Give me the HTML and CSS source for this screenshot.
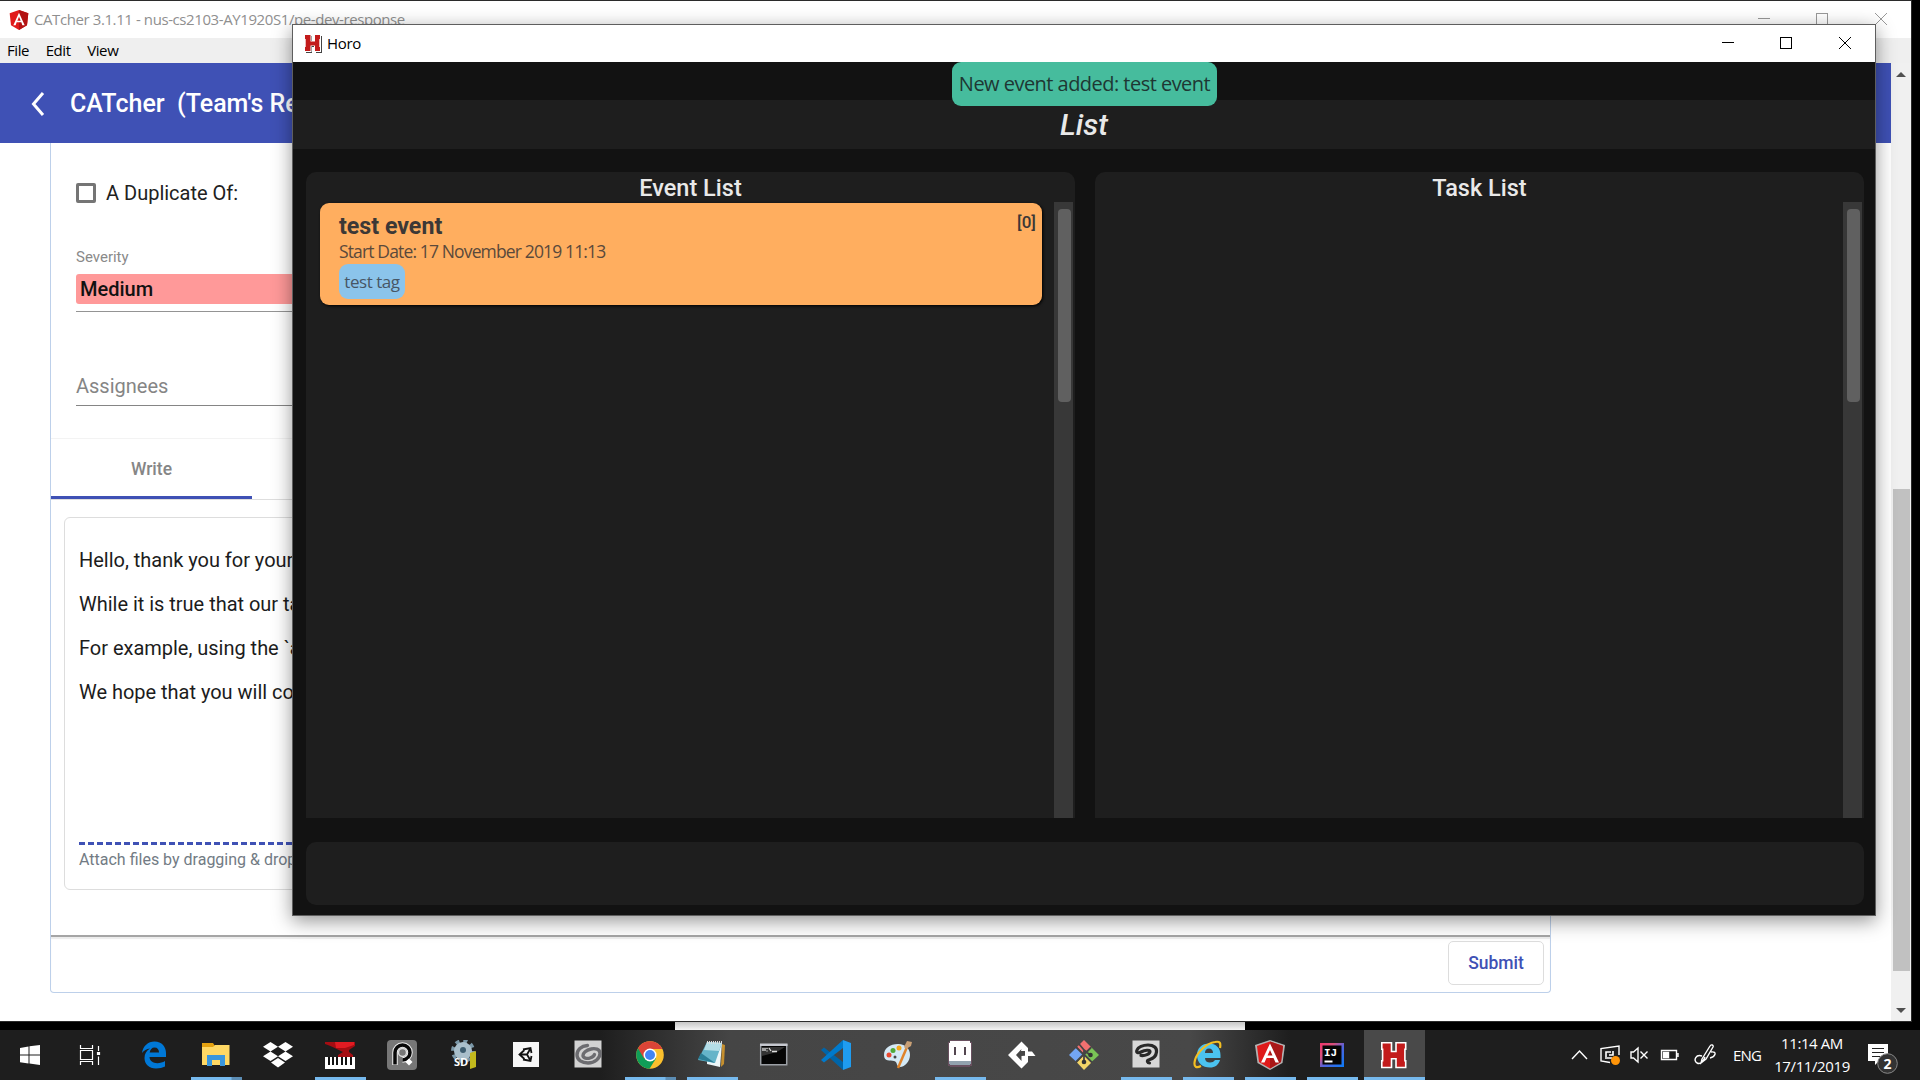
FILE: index.html
```html
<!DOCTYPE html>
<html lang="en">
<head>
<meta charset="utf-8">
<title>Desktop</title>
<link rel="stylesheet" href="styles.css">
</head>
<body>
<div class="desktop">
  <div class="backdrop"></div>

  <section class="catcher">
    <header class="titlebar muted">
      <svg class="ang" width="20" height="22" viewBox="0 0 30 30"><path fill="#e11a1a" d="M15 0 29 5 27 23 15 30 3 23 1 5z"/><path fill="#b31212" d="M15 0 29 5 27 23 15 30z"/><path fill="#fff" fill-rule="evenodd" d="M15 4 23.500 23H20L18.500 18.500H11.500L10 23H6.500zM15 10 12.500 16H17.500z"/></svg>
      <span class="t-title">CATcher 3.1.11 - nus-cs2103-AY1920S1/pe-dev-response</span>
      <svg class="winctl" width="174" height="37" viewBox="0 0 174 37" fill="none" stroke="#999" shape-rendering="crispEdges"><path d="M21 17.500h12M79.500 12.500h11v11h-11z"/><path shape-rendering="auto" d="M138 12l12 12M150 12l-12 12"/></svg>
    </header>
    <nav class="menubar"><span>File</span><span>Edit</span><span>View</span></nav>
    <div class="view">
      <div class="page">
        <div class="toolbar">
          <svg width="16" height="28" viewBox="0 0 16 28" fill="none" stroke="#fff" stroke-width="3"><path d="M13 4 3.500 15 13 26"/></svg>
          <span>CATcher&nbsp; (Team's Response)</span>
        </div>
        <main class="issue">
          <div class="fields">
            <div class="dup"><i></i><span>A Duplicate Of:</span></div>
            <div class="label">Severity</div>
            <div class="select"><span>Medium</span></div>
            <div class="assign">Assignees</div>
          </div>
          <div class="tabs"><div class="tab">Write</div></div>
          <div class="editor">
            <p>Hello, thank you for your report.</p>
            <p>While it is true that our tags are</p>
            <p>For example, using the `add`</p>
            <p>We hope that you will consider</p>
            <div class="dash"></div>
            <div class="attach">Attach files by dragging &amp; dropping</div>
          </div>
          <div class="actions"><button class="submit">Submit</button></div>
        </main>
      </div>
      <div class="vscroll">
        <svg width="10" height="5" viewBox="0 0 10 5"><path fill="#505050" d="M5 0 10 5H0z"/></svg>
        <div class="vthumb"></div>
        <svg width="10" height="5" viewBox="0 0 10 5"><path fill="#505050" d="M0 0H10L5 5z"/></svg>
      </div>
    </div>
  </section>

  <section class="horo">
    <header class="titlebar">
      <svg class="hlogo" width="19" height="19" viewBox="0 0 19 19"><path fill="#444" d="M2 2h6v5h4V2h6v17h-6v-6H8v6H2z"/><path fill="#fff" d="M0 0h7.500v7H10V0h7v18h-7v-6H7.500v6H0z"/><path fill="#c31b1b" d="M1 1h5.500v6.500H11V1h5v4h-.7v8h.7v4h-5v-5.500H6.500V17H1v-4h.7V5H1z"/></svg>
      <span class="h-title">Horo</span>
      <svg class="winctl" width="174" height="37" viewBox="0 0 174 37" fill="none" stroke="#000" shape-rendering="crispEdges"><path d="M21 17.500h12M79.500 12.500h11v11h-11z"/><path shape-rendering="auto" d="M138 12l12 12M150 12l-12 12"/></svg>
    </header>
    <div class="band">List</div>
    <div class="toast">New event added: test event</div>
    <div class="panels">
      <div class="panel">
        <h2>Event List</h2>
        <div class="content">
          <article class="card">
            <div class="head"><b>test event</b><span class="idx">[0]</span></div>
            <div class="date">Start Date: 17 November 2019 11:13</div>
            <span class="tag">test tag</span>
          </article>
          <div class="track"><div class="thumb"></div></div>
        </div>
      </div>
      <div class="panel">
        <h2>Task List</h2>
        <div class="content"><div class="track"><div class="thumb"></div></div></div>
      </div>
    </div>
    <div class="command"></div>
  </section>

  <footer class="taskbar">
    <div class="sys"><svg width="20" height="20" viewBox="0 0 20 20" fill="#fff"><path d="M0 3 8.500 1.500V9.500H0zM9.500 1.300 20 0V9.500H9.500zM0 10.500H8.500V18.500L0 17.200zM9.500 10.500H20V20L9.500 18.600z"/></svg></div>
    <div class="sys"><svg width="22" height="20" viewBox="0 0 22 20" fill="none" stroke="#fff" stroke-width="1.200"><path d="M1.500 0v3.500h12V0M1.500 20v-3.500h12V20M1.500 5.500h12v9h-12zM19.500 1v5M19.500 11.500V20"/><path fill="#fff" d="M18.500 7.500h2v2h-2z"/></svg></div>
    <div class="app"><svg viewBox="0 0 30 30"><path fill="#0078d7" d="M3 13C4 6 9 1.500 15.500 1.500 23 1.500 27 7 27 13v4H10.500c.3 4 3.500 6.200 7.700 6.200 3 0 5.600-.8 7.800-2.200v5.500c-2.500 1.300-5.500 2-9 2C10 28.500 5.500 24 5.500 18c0-4 2-7.500 5.500-9.500C7.500 9 5 10.500 3 13zM10.700 12.500H20c0-3-1.500-5-4.500-5-2.600 0-4.400 2-4.800 5z"/></svg></div>
    <div class="app open multi"><svg viewBox="0 0 30 30"><path fill="#e5a210" d="M1 3h11l2 3h14v5H1z"/><path fill="#ffd864" d="M1 7h11l2-2h14.500v20H1z"/><path fill="#3a96dd" d="M6 15h18v11h-5v-6h-8v6H6z"/></svg></div>
    <div class="app"><svg viewBox="0 0 30 30" fill="#fff"><path d="M7.500 2 15 6.700 7.500 11.500 0 6.700zM22.500 2 30 6.700 22.500 11.500 15 6.700zM7.500 11.500 15 16.200 7.500 21 0 16.200zM22.500 11.500 30 16.200 22.500 21 15 16.200zM15 18l7 4.500-7 5-7-5z"/></svg></div>
    <div class="app open"><svg viewBox="0 0 30 30"><path fill="#a50d12" d="M0 2h30v4l-6 4v2l4 3v2H13v-2l5-3C12 9 8 7 0 4z"/><path fill="#e21b22" d="M10 2h19v3L20 8H11z"/><path fill="#fff" d="M0 17h30v12H0z"/><path stroke="#111" stroke-width="2" d="M4 17v8M8 17v8M12 17v8M17 17v8M21 17v8M26 17v8"/></svg></div>
    <div class="app"><svg viewBox="0 0 30 30"><rect width="30" height="30" rx="4" fill="#777"/><g fill="none"><path stroke="#eee" stroke-width="5.500" d="M8 25V12.500a7.500 7.500 0 1 1 7.500 7.500"/><path stroke="#080808" stroke-width="3.500" d="M8 24.500V12.500a7.500 7.500 0 1 1 7.500 7.500"/><circle cx="15.500" cy="12.500" r="4" stroke="#ddd" stroke-width="1.500"/></g><path fill="#fff" d="m22 18.500 3.500 3.500-3.500 3.500-3.500-3.500z"/></svg></div>
    <div class="app"><svg viewBox="0 0 30 30"><circle cx="14" cy="11" r="10" fill="none" stroke="#7b98a8" stroke-width="4" stroke-dasharray="4 3.850"/><circle cx="14" cy="11" r="9" fill="#a9bfcb"/><circle cx="14" cy="10" r="3" fill="#3d5d70"/><path fill="#c2b91d" d="M21 13l6-2v16l-6 2z"/><text x="5" y="26" class="ic-sd">SD</text></svg></div>
    <div class="app"><svg viewBox="0 0 30 30"><path fill="#f7f7f7" d="M2 2h26v25H2z"/><path fill="none" stroke="#111" stroke-width="1.800" d="M13.500 10 8.500 14.500l5 4.500M12 9.500l7.500-1.500 1 5M12 19.500l7.500 1.500 1-5M8.500 14.500H16M16 14.500l3.500-6M16 14.500l3.500 6"/></svg></div>
    <div class="app"><svg viewBox="0 0 30 30"><path fill="#d2d2d2" d="M1.500.500h27v27h-27z"/><path fill="none" stroke="#6c6c70" stroke-width="3.400" stroke-linecap="round" d="M14.500 5.500C8 6 4 10 4 15c0 5 5 8 11 8 7 0 12-5 12-9.500C27 9 22 8 18 9c-5 1-8 4-8 6.500s4 3.500 7 2.500c2.500-.8 4-2 4.500-3.500"/></svg></div>
    <div class="app open multi"><svg viewBox="0 0 30 30"><circle cx="15" cy="15" r="13.800" fill="#fbc02d"/><path fill="#0f9d58" d="M3 8.200A13.800 13.800 0 0 0 14.500 28.800L21 18.500 15 15z"/><path fill="#db4437" d="M3 8.200a13.800 13.800 0 0 1 24.300.8H15L9 18.500z"/><circle cx="15" cy="15" r="6.500" fill="#fff"/><circle cx="15" cy="15" r="5" fill="#4285f4"/></svg></div>
    <div class="app open"><svg viewBox="0 0 30 30"><path fill="#c58f2e" d="m25 4 3 1-1 19-3 3z"/><path fill="#edf6f8" d="m10 2 15 1-2 24-13-3z"/><path fill="#65b4c9" d="m10 2 15 1-7 20-17-3z"/><path fill="#b4dde6" d="m10 2 15 1-3 8-15-1z"/><path fill="#2b7e96" d="m1 19 3-6 14 10z"/><path stroke="#ddd" d="M10 2.500h15" stroke-dasharray="1 1" stroke-width="3"/></svg></div>
    <div class="app"><svg viewBox="0 0 30 30"><path fill="#050505" stroke="#9b9fa5" stroke-width="1.500" d="M1.700 4.700h26v20h-26z"/><path fill="#c6c8cf" d="M1 3.500h27.500V6H1z"/><path fill="#333" d="M3 7h23l-8 5-15 4z"/><path stroke="#ddd" fill="none" stroke-width="1.300" d="M4 8v3M6 8v3M8 8v1M8 10.500v1M10 8l2 3M13 11.500h5"/></svg></div>
    <div class="app"><svg viewBox="0 0 30 30"><path fill="#0065a9" d="m0 10 3-2.500L22 22v8z"/><path fill="#007acc" d="m0 20 3 2.500L22 8V0z"/><path fill="#1f9cf0" d="m22 0 8 3v24l-8 3z"/></svg></div>
    <div class="app"><svg viewBox="0 0 30 30"><path fill="#d4e9f5" d="M15 4c8 0 12 5 12 11s-5 12-10 12c-4 0-2-5-6-6S1 22 1 15 7 4 15 4z"/><circle cx="6" cy="15" r="2.500" fill="#e8482f"/><circle cx="10" cy="10.500" r="2.500" fill="#51a838"/><circle cx="16" cy="8" r="2.500" fill="#f4a71c"/><circle cx="12" cy="17" r="1.500" fill="#444"/><path stroke="#df842b" stroke-width="2.500" d="M24 7 15 28"/><path fill="#c9a075" d="m21 7 3-6 5 1-1 4-5 3z"/></svg></div>
    <div class="app open"><svg viewBox="0 0 30 30"><path fill="#69505f" d="M5 0h20v2h2v24h-2v1H5v-1H3V2h2z"/><path fill="#fff" d="M5 1h20v2h1v18H4V3h1z"/><path fill="#92a2ae" d="M4 21h22v3h-1v1H5v-1H4z"/><path fill="#534650" d="M9 7h2v8H9zM19 7h2v8h-2z"/></svg></div>
    <div class="app"><svg viewBox="0 0 30 30"><path fill="#fff" fill-rule="evenodd" d="M14.500 1.500 21 8v3.500h4L28.500 16H21v6l-6.500 6.500L1 15zM14.500 9 9 15l5.500 6v-5l3.500-.2V11h-4z"/></svg></div>
    <div class="app"><svg viewBox="0 0 30 30"><path fill="#f17070" d="m15 0 7 7-7 7-7-7z"/><path fill="#73a5f3" d="m7.500 7.500 7 7-7 7.500L0 15z"/><path fill="#7ac456" d="m22.500 7.500 7.500 7.500-7.500 7-7.500-7z"/><path fill="#f4d567" d="m15 15 7.500 7.500L15 30l-7-7.500z"/><path fill="none" stroke="#444" stroke-width="1.800" d="M10 4 15 10v12M15 10l6 5M7 7l7.500 7.500L7 22M22 7.500l-7 7 8 8"/><circle cx="15" cy="22" r="2.300" fill="#333"/><circle cx="21.500" cy="15" r="2.300" fill="#333"/></svg></div>
    <div class="app open"><svg viewBox="0 0 30 30"><path fill="#d8d8d8" d="M1.500.500h27v27h-27z"/><path fill="none" stroke="#292929" stroke-width="3.200" stroke-linecap="round" d="M10 15.500c4 .5 9-1.500 9-4 0-2-5-1.500-9 .5-3 1.500-5 .5-4-2C7 7 12 5 17 5c6 0 9 3 8.500 7-.5 5-4 7-8 8-2 .5-1 3 1 3"/></svg></div>
    <div class="app open"><svg viewBox="0 0 30 30"><path fill="#4bc3f0" d="M4 15C4 8 9 3.500 16 3.500S27.500 8 27.500 15v3H12c0 3 2 4.500 5 4.500 2 0 4-.8 5-2.500h5c-1.500 5-5 7.500-10 7.500C9.500 27.500 4 23 4 15zm8-2h8c0-3-1.500-4.500-4-4.500s-4 1.500-4 4.500z"/><path fill="none" stroke="#f3be22" stroke-width="2.200" d="M27 8c1-5 0-7-5-6C13 3 4 13 2 20c-2 8 2 8 6 6"/></svg></div>
    <div class="app open"><svg viewBox="0 0 30 30"><path fill="#b3b3b3" d="M15 0 30 5 27.500 23 15 30 2.500 23 0 5z"/><path fill="#df1b1b" d="M15 1.500 28 6 26 22 15 28.500 4 22 2 6z"/><path fill="#a91717" d="M15 1.500 28 6 26 22 15 28.500z"/><path fill="#fff" fill-rule="evenodd" d="M15 3.500 24 22.500h-3.500L18.500 18h-7l-2 4.500H6zM15 10l-2.500 5.500h5z"/></svg></div>
    <div class="app open"><svg viewBox="0 0 30 30"><defs><linearGradient id="ij" x2="1" y2="1"><stop stop-color="#f0356b"/><stop offset=".3" stop-color="#d9507b"/><stop offset=".55" stop-color="#5263dd"/><stop offset="1" stop-color="#087cfa"/></linearGradient></defs><path fill="url(#ij)" d="M3 3h24v24H3z"/><path fill="#050505" d="M5.500 5.500h19v19h-19z"/><text x="7" y="15.500" class="ic-ij">IJ</text><path fill="#fff" d="M7.500 20.500h8v2h-8z"/></svg></div>
    <div class="app active"><svg viewBox="0 0 30 30"><path fill="#c31b1b" stroke="#fff" stroke-width="1.600" d="M2.800 2.800h9.700v8.700h4.500V2.800h9.700v6.400h-.8v11.600h.8v6.700H17v-8.700h-4.500v8.700H2.800v-6.700h.8V9.200h-.8z"/></svg></div>
    <div class="tray">
      <svg class="tr-ic" width="150" height="24" viewBox="0 0 150 24" fill="none" stroke="#fff" stroke-width="1.400"><path d="M1 16 8.500 8 16 16M48 12V3L30 5.500v12.500l9 1.500"/><path stroke-width="1.600" d="M34 15h7M35 14V9h5M38 12h4V8"/><path d="M60 9h2.500L67 5v14l-4.500-4H60zM69.500 8.500l7 7M76.500 8.500l-7 7"/><path d="M90.500 7.500h15v9h-15zM107 10v4"/><path fill="#fff" d="M92.500 9.500h5v5h-5z"/><path d="m131 16 8-13c1-2 4-1 3 1l-7 12-5 4zM131 13c-6-2-9 4-5 7 4 2 7-3 8-6M140 9c7-1 4 5-1 6"/><circle cx="44.500" cy="17.500" r="4.500" fill="#ff9408" stroke="none"/></svg>
      <span class="lang">ENG</span>
      <div class="clock"><span>11:14 AM</span><span>17/11/2019</span></div>
      <svg class="note" width="34" height="34" viewBox="0 0 34 34"><path fill="#fff" d="M2 2h20v17h-9l-4 4v-4H2z"/><path stroke="#222" d="M6 6.500h12M6 10.500h12M6 14.500h8"/><circle cx="21.500" cy="21.500" r="9.800" fill="#333" stroke="#888"/><text x="17.500" y="26.500" class="ic-n">2</text></svg>
    </div>
  </footer>
</div>
</body>
</html>
```
FILE: styles.css
```css
* { box-sizing: border-box; }
body { margin: 0; background: #000; overflow: hidden; font-family: Roboto, sans-serif; }
.desktop { position: relative; width: 1920px; height: 1080px; overflow: hidden; background: #000; display: flex; flex-direction: column; justify-content: flex-end; }
.backdrop { position: absolute; left: 675px; top: 0; width: 570px; height: 1030px; background: linear-gradient(#aaa 0 1px, #c0c0c0 1px 1021px, #f4f4f4 1030px); }

/* windows */
.titlebar { height: 37px; background: #fff; display: flex; align-items: center; flex: none; font-family: "Open Sans", sans-serif; font-size: 15px; line-height: 20px; }
.titlebar span { padding-bottom: 2px; }
.winctl { margin-left: auto; flex: none; }
.muted { color: #8f8f8f; }

.catcher { position: absolute; left: 0; top: 1px; width: 1911px; height: 1020px; background: #fff; display: flex; flex-direction: column; box-shadow: 0 0 0 1px #2b2b2b; }
.catcher > .titlebar { padding-left: 9px; }
.ang { margin-right: 5px; }
.t-title { letter-spacing: -0.41px; white-space: nowrap; }
.menubar { height: 25px; background: #efefef; display: flex; gap: 16.5px; padding-left: 7px; font: 15px/25px "Open Sans", sans-serif; letter-spacing: -0.4px; color: #000; flex: none; }
.view { display: flex; flex: 1; min-height: 0; }
.page { flex: 1; display: flex; flex-direction: column; align-items: flex-start; }
.toolbar { align-self: stretch; height: 80px; background: #3f51b5; color: #fff; display: flex; align-items: center; gap: 24px; padding-left: 30px; font-size: 25px; font-weight: 500; flex: none; }
.issue { width: 1501px; height: 850px; margin-left: 50px; border: 1px solid #bdd0ea; border-top: 0; border-radius: 0 0 4px 4px; display: flex; flex-direction: column; }
.fields { height: 296px; padding: 37px 25px 0; border-bottom: 1px solid #f3f3f3; flex: none; }
.dup { display: flex; align-items: center; gap: 10px; height: 26px; font-size: 20px; color: #212121; }
.dup i { width: 20px; height: 20px; border: 3px solid #757575; border-radius: 2px; }
.label { margin-top: 41px; height: 27px; line-height: 20px; font-size: 15px; color: #8a8a8a; }
.select { height: 38px; border-bottom: 1px solid #949494; font-size: 20px; font-weight: 500; line-height: 30px; color: #111; }
.select span { display: block; height: 30px; background: #ff9999; border-radius: 3px; padding-left: 4px; }
.assign { height: 94px; border-bottom: 1px solid #858585; padding-top: 63px; font-size: 20px; line-height: 23px; color: #858585; }
.tabs { height: 61px; border-bottom: 1px solid #dedede; flex: none; }
.tab { width: 201px; height: 60px; border-bottom: 3px solid #3f51b5; text-align: center; font-size: 17.5px; font-weight: 500; line-height: 60px; color: #868686; }
.editor { margin: 17px 13px 0; height: 373px; border: 1px solid #ddd; border-radius: 6px; padding: 20px 14px 0; color: #1c1c1c; flex: none; }
.editor p { margin: 0; height: 44px; line-height: 44px; font-size: 20px; letter-spacing: -.02px; }
.dash { height: 3px; margin-top: 128px; background: repeating-linear-gradient(90deg, #3f51b5 0 6px, #fff 6px 9px); }
.attach { margin-top: 4px; font-size: 16px; line-height: 22px; color: #727b84; }
.actions { margin-top: 45px; border-top: 2px solid #a5a5a5; box-shadow: inset 0 2px 1px #ececec; padding: 4px 6px 0; display: flex; justify-content: flex-end; }
.submit { width: 96px; height: 44px; border: 1px solid #ddd; border-radius: 5px; background: #fff; color: #3f51b5; font: 500 17.5px Roboto, sans-serif; padding: 0; }
.vscroll { width: 20px; background: #f0f0f0; display: flex; flex-direction: column; align-items: center; padding: 9px 0 8px; }
.vthumb { width: 17px; height: 482px; background: #c1c1c1; margin: 412px 0 auto; }

.horo { position: absolute; left: 292px; top: 24px; width: 1584px; height: 892px; border: 1px solid #5e5e5e; background: #121212; box-shadow: 0 5px 18px rgba(0,0,0,.42); display: flex; flex-direction: column; color: #e9e9e9; }
.horo .titlebar { padding-left: 11px; color: #000; }
.hlogo { margin-right: 4px; }
.h-title { letter-spacing: -.3px; }
.band { margin-top: 38px; height: 49px; background: #1e1e1e; text-align: center; font-size: 30px; font-style: italic; font-weight: 500; line-height: 49px; flex: none; }
.toast { position: absolute; left: 659px; top: 37px; width: 265px; height: 44px; border-radius: 9px; background: #46bc9d; color: #1e3733; text-align: center; font: 20px/43px "Open Sans", sans-serif; letter-spacing: -.53px; white-space: nowrap; }
.panels { margin: 23px 11px 0 13px; display: grid; grid-template-columns: 1fr 1fr; gap: 20px; height: 646px; flex: none; }
.panel { background: #1e1e1e; border-radius: 10px 10px 0 0; display: flex; flex-direction: column; }
.panel h2 { margin: 0; height: 30px; text-align: center; font-size: 23.5px; font-weight: 500; line-height: 32px; }
.content { flex: 1; display: flex; align-items: flex-start; padding: 0 2px 0 14px; }
.card { width: 722px; height: 102px; margin-top: 1px; border-radius: 9px; background: #ffae5f; color: #3c3836; padding: 8px 6px 0 19px; box-shadow: 1px 1px 3px #000; }
.head { display: flex; justify-content: space-between; line-height: 30px; height: 28px; }
.head b { font-size: 23.2px; font-weight: 700; }
.idx { font-size: 17px; font-weight: 500; line-height: 22px; }
.date { font: 17.500px/25px "Open Sans", sans-serif; height: 25px; letter-spacing: -.86px; color: #5a493b; }
.tag { display: block; width: 66px; height: 35px; border-radius: 9px; background: #8bc4eb; text-align: center; font: 17px/36px "Open Sans", sans-serif; letter-spacing: -.45px; color: #475665; }
.track { margin-left: auto; width: 19px; align-self: stretch; background: #383838; padding: 7px 2px 0 4px; }
.thumb { width: 13px; height: 193px; border-radius: 4px; background: #606060; }
.command { margin: 24px 11px 0 13px; height: 63px; border-radius: 10px; background: #1e1e1e; flex: none; }

/* taskbar */
.taskbar { position: relative; height: 50px; display: flex; background: linear-gradient(90deg, #1e1e1e 600px, #454545 730px, #484848 1190px, #1e1e1e 1290px); flex: none; }
.sys { width: 60px; display: flex; align-items: center; justify-content: center; }
.app { width: 62px; display: flex; align-items: center; justify-content: center; position: relative; flex: none; }
.app:nth-child(3) { margin-left: 3px; }
.app svg { width: 30px; height: 30px; }
.open::after { content: ""; position: absolute; left: 6px; bottom: 0; width: 51px; height: 3px; background: #76b9ed; }
.multi::after { background: linear-gradient(90deg, #76b9ed 40px, #5c8db4 41px); }
.app.active { width: 61px; margin-left: 1px; padding-right: 1px; background: #494949; box-shadow: inset 0 -3px #76b9ed; }
.tray { margin-left: auto; display: flex; align-items: center; color: #fff; font-family: "Open Sans", sans-serif; font-size: 15px; width: 349px; flex: none; }
.tr-ic { flex: none; }
.lang { margin-left: 12px; width: 32px; font-size: 15px; letter-spacing: -.8px; }
.clock { width: 78px; margin-left: 8px; display: flex; flex-direction: column; text-align: center; line-height: 23px; font-size: 15px; letter-spacing: -.4px; white-space: nowrap; }
.note { margin: 8px 0 0 15px; flex: none; }
.ic-sd { font: 700 11px "Open Sans", sans-serif; fill: #fff; }
.ic-ij { font: 700 11px "Liberation Mono", monospace; fill: #fff; }
.ic-n { font: 700 14px "Open Sans", sans-serif; fill: #fff; }
```
